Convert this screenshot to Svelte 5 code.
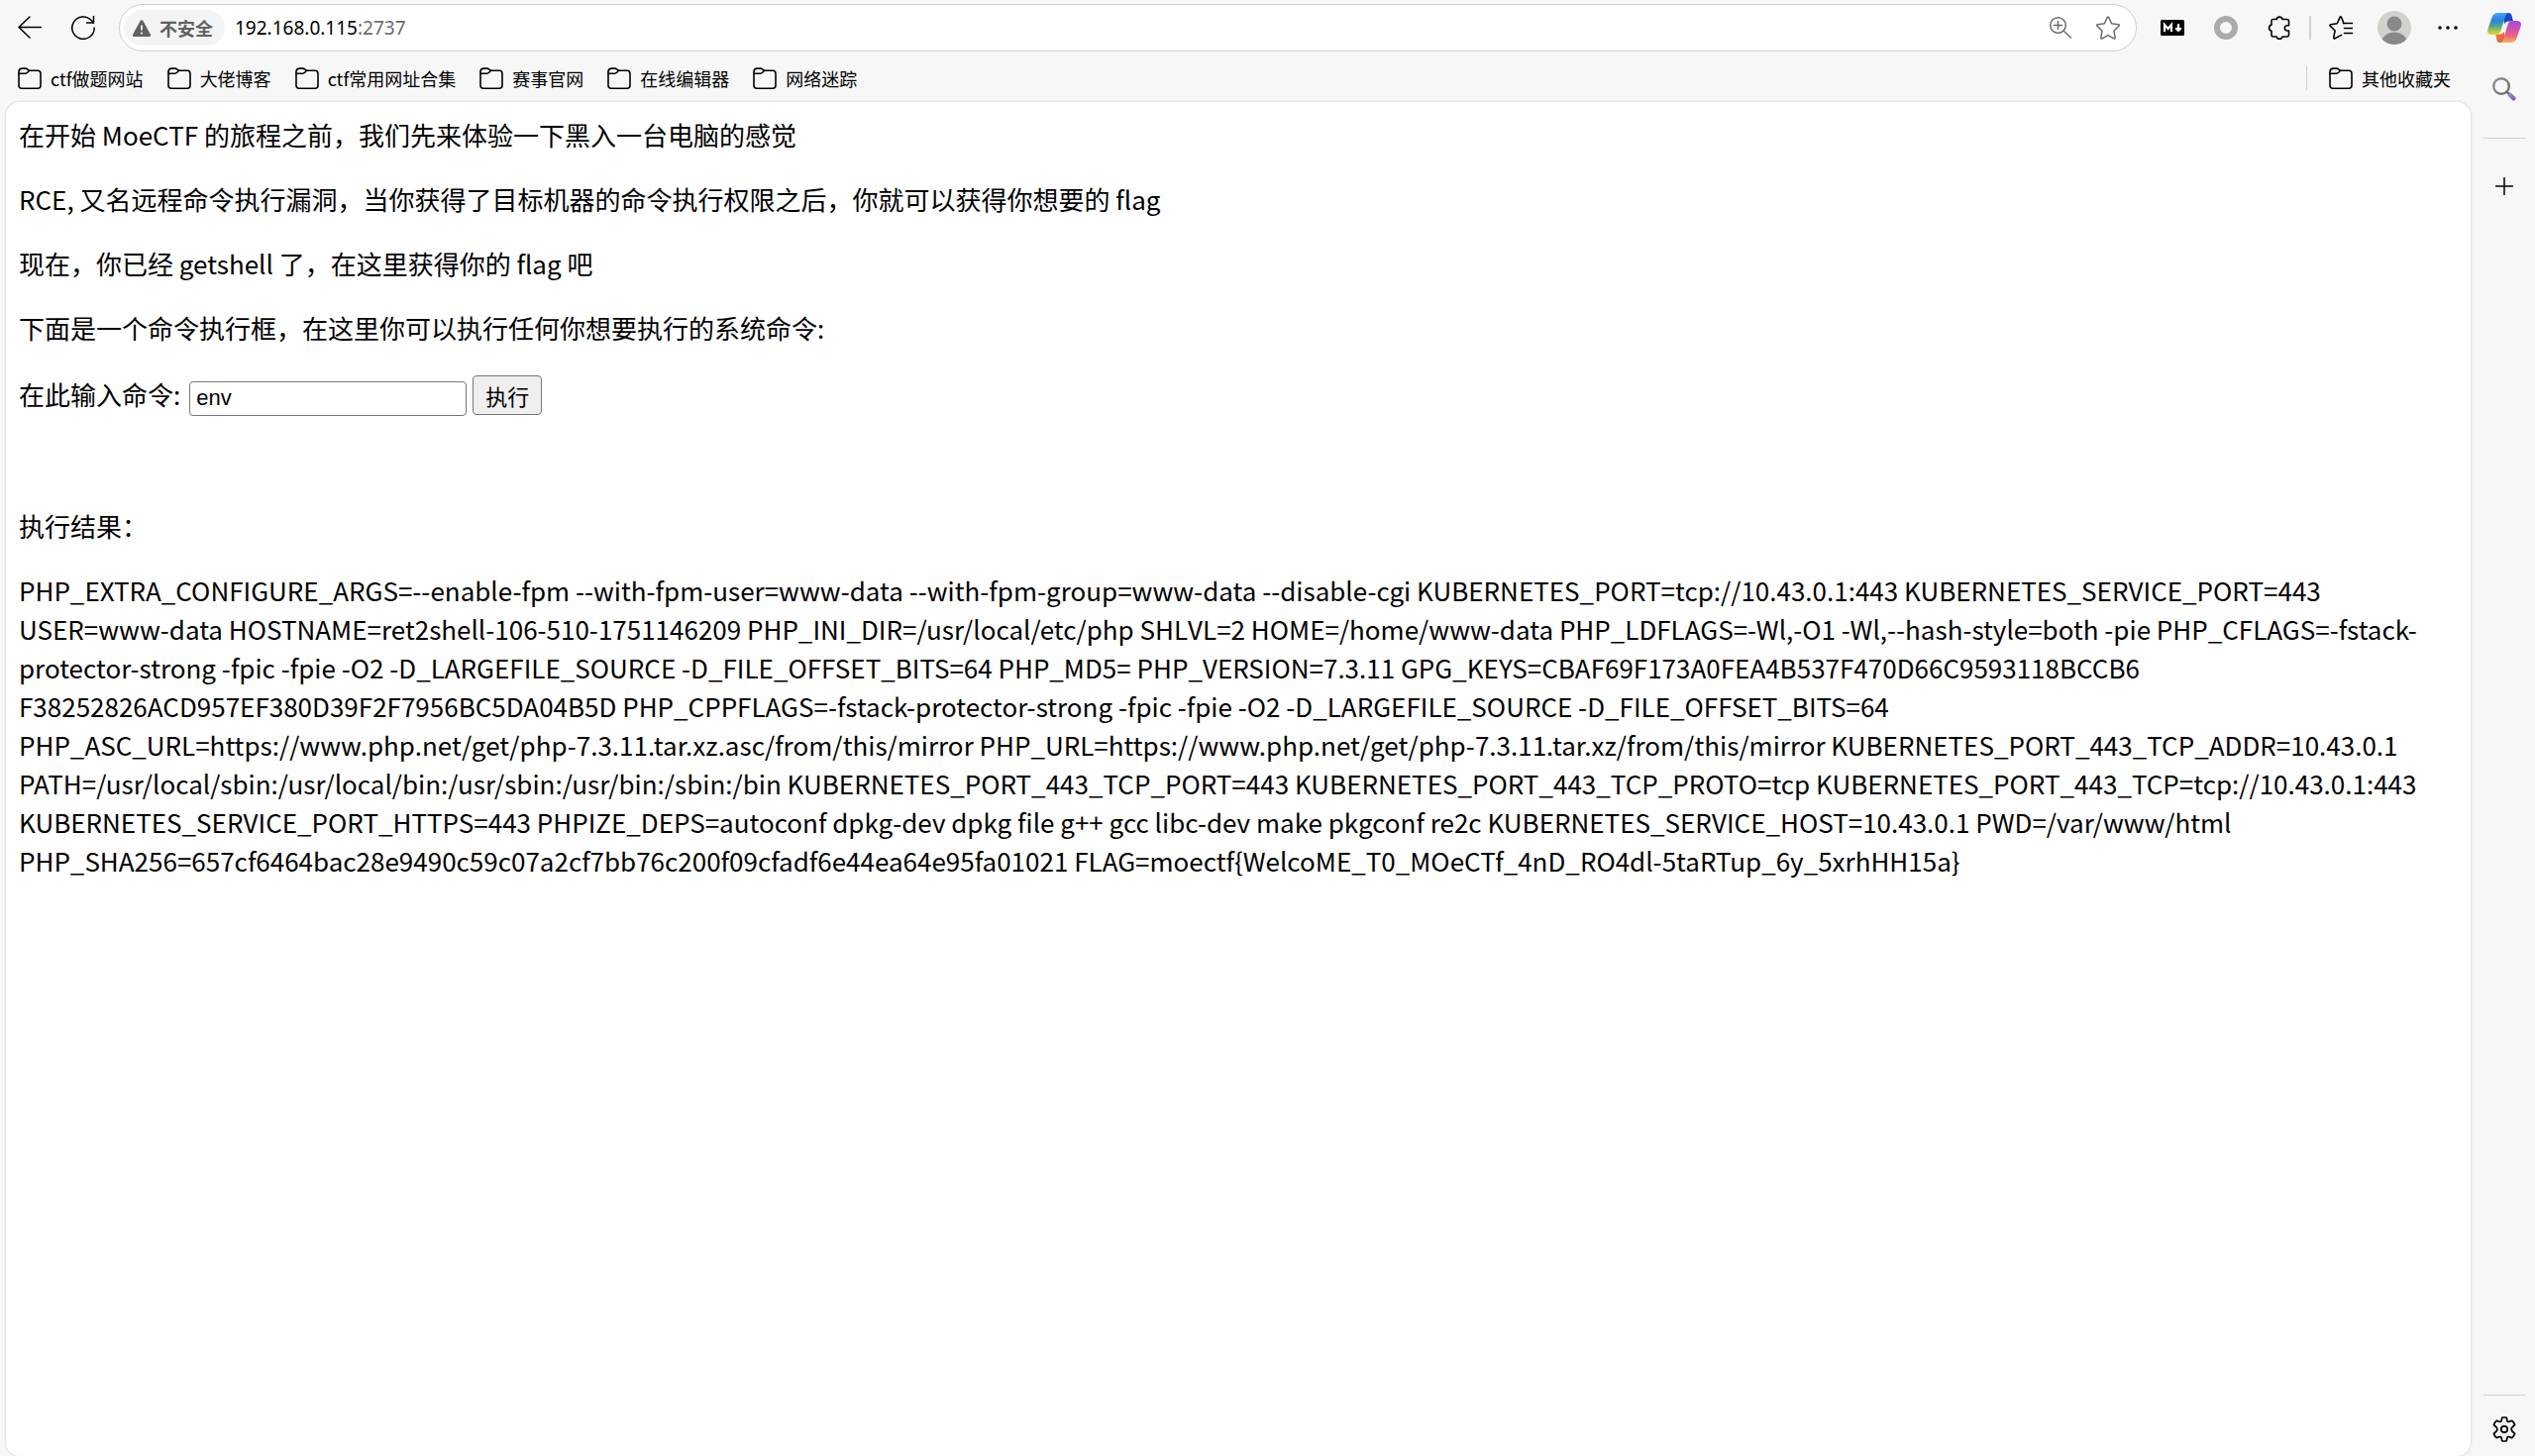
<script>
	let command = $state('env');

	const bookmarks = ['ctf做题网站', '大佬博客', 'ctf常用网址合集', '赛事官网', '在线编辑器', '网络迷踪'];

	const intro = [
		'在开始 MoeCTF 的旅程之前，我们先来体验一下黑入一台电脑的感觉',
		'RCE, 又名远程命令执行漏洞，当你获得了目标机器的命令执行权限之后，你就可以获得你想要的 flag',
		'现在，你已经 getshell 了，在这里获得你的 flag 吧',
		'下面是一个命令执行框，在这里你可以执行任何你想要执行的系统命令:'
	];

	const output = [
		'PHP_EXTRA_CONFIGURE_ARGS=--enable-fpm --with-fpm-user=www-data --with-fpm-group=www-data --disable-cgi',
		'KUBERNETES_PORT=tcp://10.43.0.1:443',
		'KUBERNETES_SERVICE_PORT=443',
		'USER=www-data',
		'HOSTNAME=ret2shell-106-510-1751146209',
		'PHP_INI_DIR=/usr/local/etc/php',
		'SHLVL=2',
		'HOME=/home/www-data',
		'PHP_LDFLAGS=-Wl,-O1 -Wl,--hash-style=both -pie',
		'PHP_CFLAGS=-fstack-protector-strong -fpic -fpie -O2 -D_LARGEFILE_SOURCE -D_FILE_OFFSET_BITS=64',
		'PHP_MD5=',
		'PHP_VERSION=7.3.11',
		'GPG_KEYS=CBAF69F173A0FEA4B537F470D66C9593118BCCB6 F38252826ACD957EF380D39F2F7956BC5DA04B5D',
		'PHP_CPPFLAGS=-fstack-protector-strong -fpic -fpie -O2 -D_LARGEFILE_SOURCE -D_FILE_OFFSET_BITS=64',
		'PHP_ASC_URL=https://www.php.net/get/php-7.3.11.tar.xz.asc/from/this/mirror',
		'PHP_URL=https://www.php.net/get/php-7.3.11.tar.xz/from/this/mirror',
		'KUBERNETES_PORT_443_TCP_ADDR=10.43.0.1',
		'PATH=/usr/local/sbin:/usr/local/bin:/usr/sbin:/usr/bin:/sbin:/bin',
		'KUBERNETES_PORT_443_TCP_PORT=443',
		'KUBERNETES_PORT_443_TCP_PROTO=tcp',
		'KUBERNETES_PORT_443_TCP=tcp://10.43.0.1:443',
		'KUBERNETES_SERVICE_PORT_HTTPS=443',
		'PHPIZE_DEPS=autoconf dpkg-dev dpkg file g++ gcc libc-dev make pkgconf re2c',
		'KUBERNETES_SERVICE_HOST=10.43.0.1',
		'PWD=/var/www/html',
		'PHP_SHA256=657cf6464bac28e9490c59c07a2cf7bb76c200f09cfadf6e44ea64e95fa01021',
		'FLAG=moectf{WelcoME_T0_MOeCTf_4nD_RO4dl-5taRTup_6y_5xrhHH15a}'
	];
</script>

{#snippet folder()}
	<svg class="icon" width="24" height="24" viewBox="0 0 24 24" stroke-width="1.6">
		<path d="M1 5.5a3.5 3.5 0 0 1 3-3.4h3.6c1 0 1.6.3 2.2.9L11 4.2h9a3 3 0 0 1 3 3v12a3 3 0 0 1-3 3H4a3 3 0 0 1-3-3z" />
		<path d="M1 7.2h6.5c1 0 1.5-.3 2.1-.9L11.6 4.2" />
	</svg>
{/snippet}

<div class="browser">
	<header class="toolbar">
		<button class="tool" aria-label="Back">
			<svg class="icon" width="24" height="24" viewBox="0 0 24 24" stroke-width="1.5">
				<path d="M24 11.5H1M12 1 1 11.5 12 22" />
			</svg>
		</button>
		<button class="tool" aria-label="Refresh">
			<svg class="icon" width="24" height="24" viewBox="0 0 24 24" stroke-width="1.5">
				<path d="M23.2 12A11.2 11.2 0 1 1 20.2 4.500L22.500 7" />
				<path d="M22.500 0v7h-7" />
			</svg>
		</button>

		<div class="address">
			<button class="site-info">
				<svg width="18" height="17" viewBox="0 0 18 17">
					<path d="M7.600 1a1.600 1.600 0 0 1 2.800 0l7.200 13.300A1.600 1.600 0 0 1 16.200 17H1.800A1.600 1.600 0 0 1 .4 14.300z" fill="#616161" />
					<path d="M9 5.500v5M9 12.500v2" stroke="#f4f4f4" stroke-width="1.8" />
				</svg>
				不安全
			</button>
			<a class="url" href="http://192.168.0.115:2737">192.168.0.115<span>:2737</span></a>
			<button class="address-btn" aria-label="Zoom">
				<svg class="icon" width="24" height="24" viewBox="0 0 24 24" stroke-width="1.5">
					<circle cx="9.5" cy="9.5" r="7.8" />
					<path d="M9.500 5.500v8M5.500 9.500h8M15.200 15.200 22.500 22" />
				</svg>
			</button>
			<button class="address-btn" aria-label="Favorite">
				<svg class="icon" width="24" height="24" viewBox="0 0 24 24" stroke-width="1.5">
					<path d="M11.200 1.600q.8-1.400 1.600 0l2.800 6.200 6.800 1q1.500.3.500 1.500l-4.900 4.800 1.200 6.800q.1 1.600-1.300.9L12 19.600l-5.900 3.200q-1.400.7-1.300-.9L6 15.100l-4.900-4.800q-1-1.200.5-1.500l6.800-1z" />
				</svg>
			</button>
		</div>

		<button class="tool" aria-label="Markdown viewer">
			<svg width="24" height="16" viewBox="0 0 24 16">
				<rect width="24" height="16" rx="1.5" />
				<path d="M4 12V5l3.500 4L11 5v7" fill="none" stroke="#fff" stroke-width="2.2" />
				<path d="M18 4v7M15.200 8.200 18 11l2.800-2.800" fill="none" stroke="#fff" stroke-width="2.2" />
			</svg>
		</button>
		<button class="tool" aria-label="Extension">
			<svg width="24" height="24" viewBox="0 0 24 24">
				<circle cx="12" cy="12" r="9" fill="none" stroke="#ababab" stroke-width="6" />
			</svg>
		</button>
		<button class="tool" aria-label="Extensions">
			<svg class="icon" width="24" height="24" viewBox="0 0 24 24" stroke-width="1.6">
				<path d="M4 5.200a1.500 1.500 0 0 1 1.500-1.700H9a3.200 3.200 0 0 1 6.200 0h4.300a2 2 0 0 1 2 2v4.200h-2a2.700 2.700 0 0 0 0 5.300h2v4a2 2 0 0 1-2 2h-4.300a3.200 3.200 0 0 1-6.200 0H5.500A1.500 1.500 0 0 1 4 19.500v-4.200a3.200 3.200 0 0 1 0-6.200z" />
			</svg>
		</button>
		<span class="divider"></span>
		<button class="tool" aria-label="Favorites">
			<svg class="icon" width="24" height="24" viewBox="0 0 24 24" stroke-width="1.6">
				<path d="M15 7.700 12.600 1.600q-.8-1.400-1.600 0L8.300 7.700l-6.500 1q-1.400.3-.5 1.500l4.800 4.800-1.300 6.700q0 1.600 1.300 1l6.500-3.300M14.500 7.500H24M15.500 12.500H24M15.500 17.500H24" />
			</svg>
		</button>
		<button class="tool" aria-label="Profile">
			<svg width="34" height="34" viewBox="0 0 34 34">
				<clipPath id="avatar"><circle cx="17" cy="17" r="17" /></clipPath>
				<g clip-path="url(#avatar)" fill="#8a8987">
					<rect width="34" height="34" fill="#d2d1ce" />
					<circle cx="17" cy="13" r="7.5" />
					<path d="M4 30c2-5 7-8.500 13-8.500S28 25 30 30c-3 3-8 4-13 4S7 33 4 30z" />
				</g>
			</svg>
		</button>
		<button class="tool" aria-label="Settings and more">
			<svg width="20" height="4" viewBox="0 0 20 4">
				<circle cx="2" cy="2" r="1.8" /><circle cx="10" cy="2" r="1.8" /><circle cx="18" cy="2" r="1.8" />
			</svg>
		</button>
		<button class="tool copilot" aria-label="Copilot">
			<svg width="34" height="30" viewBox="0 0 34 30">
				<defs>
					<linearGradient id="cool" x1="0" y1="0" x2="0" y2="1">
						<stop offset="0" stop-color="#3fa9f5" />
						<stop offset=".35" stop-color="#2b83dd" />
						<stop offset=".62" stop-color="#4fa88c" />
						<stop offset=".85" stop-color="#b4cb3d" />
						<stop offset="1" stop-color="#f6d22e" />
					</linearGradient>
					<linearGradient id="warm" x1="0" y1="0" x2="0" y2="1">
						<stop offset="0" stop-color="#9a4df0" />
						<stop offset=".45" stop-color="#d953a3" />
						<stop offset=".7" stop-color="#f0667c" />
						<stop offset="1" stop-color="#f5b25e" />
					</linearGradient>
					<linearGradient id="navy" x1="0" y1="0" x2="1" y2="1">
						<stop offset="0" stop-color="#1c50d8" />
						<stop offset="1" stop-color="#1b3cb4" />
					</linearGradient>
					<linearGradient id="ember" x1="0" y1="0" x2="1" y2="1">
						<stop offset="0" stop-color="#f0913d" />
						<stop offset="1" stop-color="#dd4a3c" />
					</linearGradient>
				</defs>
				<path d="M16 0h5.500c1.600 0 2.500 1 3 2.600L26 8.500h-4c-3 0-4 1-5 3z" fill="url(#navy)" />
				<path d="M18 30h-5.500c-1.600 0-2.500-1-3-2.600L8 21.500h4c3 0 4-1 5-3z" fill="url(#ember)" />
				<path d="M10.500 0H22c-2.500 0-3.600 2-4.400 4.600L13.500 18c-.9 2.600-2.200 4-5 4H4c-3 0-4.500-2-3.800-5L4.500 4.500C5.500 1.500 7.500 0 10.500 0z" fill="url(#cool)" />
				<path d="M23.500 30H12c2.500 0 3.600-2 4.400-4.600L20.500 12c.9-2.600 2.200-4 5-4H30c3 0 4.500 2 3.800 5l-4.300 12.500c-1 3-3 4.500-6 4.500z" fill="url(#warm)" />
			</svg>
		</button>
	</header>

	<div class="body">
		<div class="main">
			<nav class="bookmarks">
				{#each bookmarks as name (name)}
					<button class="bookmark">{@render folder()}{name}</button>
				{/each}
				<span class="divider"></span>
				<button class="bookmark">{@render folder()}其他收藏夹</button>
			</nav>

			<main class="page">
				{#each intro as line}
					<p>{line}</p>
				{/each}
				<form onsubmit={(e) => e.preventDefault()}>
					<label for="command">在此输入命令:</label>
					<input id="command" type="text" bind:value={command} />
					<button type="submit">执行</button>
				</form>
				<p>执行结果：</p>
				<p>{output.join(' ')}</p>
			</main>
		</div>

		<aside class="sidebar">
			<button class="tool" aria-label="Search">
				<svg width="24" height="24" viewBox="0 0 24 24">
					<defs>
						<linearGradient id="handle" x1="0" y1="0" x2="1" y2="1">
							<stop offset="0" stop-color="#b18be0" />
							<stop offset="1" stop-color="#7a52bd" />
						</linearGradient>
						<linearGradient id="lens" x1="0" y1="0" x2="1" y2="1">
							<stop offset="0" stop-color="#949494" />
							<stop offset="1" stop-color="#666" />
						</linearGradient>
					</defs>
					<circle cx="9" cy="9" r="7.8" fill="none" stroke="url(#lens)" stroke-width="2.4" />
					<path d="m14.500 14.500 3 3" stroke="#666" stroke-width="2.4" />
					<path d="m15.500 18.500 3-3 4.700 4.400q1 1.500-.3 3t-3 .2z" fill="url(#handle)" />
				</svg>
			</button>
			<hr />
			<button class="tool" aria-label="Customize">
				<svg class="icon" width="18" height="18" viewBox="0 0 18 18" stroke-width="1.5">
					<path d="M9 .5v17M.5 9h17" />
				</svg>
			</button>
			<hr class="bottom" />
			<button class="tool" aria-label="Settings">
				<svg class="icon" width="26" height="26" viewBox="0 0 26 26" stroke-width="1.7">
					<circle cx="13" cy="13" r="3.2" />
					<path d="M10.700 1.300q2.300-.6 4.600 0l.6 3.200q.4 1.300 1.900.9l3-1.100q2 1.600 2.800 4.200l-2.500 2.300q-1.100 1-.9 2.200t.9 2.200l2.500 2.300q-.8 2.600-2.800 4.200l-3-1.100q-1.500-.4-1.900.9l-.6 3.200q-2.300.6-4.600 0l-.6-3.200q-.4-1.300-1.900-.9l-3 1.100q-2-1.600-2.800-4.200l2.500-2.300q1-1.100 1-2.200t-1-2.200L2.400 8.500q.8-2.600 2.800-4.200l3 1.100q1.500.4 1.900-.9z" />
				</svg>
			</button>
		</aside>
	</div>
</div>

<style>
	:global(body) {
		margin: 0;
		background: #f7f7f7;
	}

	.browser {
		display: flex;
		flex-direction: column;
		min-height: 100vh;
		background: #f7f7f7;
		color: #000;
		font-family: 'Noto Sans CJK SC', sans-serif;
	}

	svg {
		flex-shrink: 0;
	}

	.icon {
		fill: none;
		stroke: currentColor;
		stroke-linecap: round;
		stroke-linejoin: round;
	}

	.toolbar {
		display: flex;
		align-items: center;
		height: 56px;
		padding: 0 1px 0 3px;
	}

	.toolbar button,
	.bookmark,
	.sidebar button {
		display: flex;
		align-items: center;
		justify-content: center;
		padding: 0;
		border: none;
		background: none;
		color: inherit;
		font-family: inherit;
		cursor: pointer;
	}

	.tool {
		width: 54px;
		height: 54px;
		flex-shrink: 0;
	}

	.toolbar .copilot {
		width: 60px;
	}

	.divider {
		width: 2px;
		height: 24px;
		margin: 0 3px;
		background: #d1d1d1;
	}

	.address {
		flex: 1;
		display: flex;
		align-items: center;
		height: 48px;
		margin: 0 9px;
		padding: 0 4px;
		box-sizing: border-box;
		border: 1px solid #cfcfcf;
		border-radius: 24px;
		background: #fff;
	}

	.address .site-info {
		gap: 9px;
		height: 36px;
		margin-right: 10px;
		padding: 0 12px 0 9px;
		border-radius: 18px;
		background: #f4f4f4;
		color: #616161;
		font-size: 18px;
		font-weight: bold;
	}

	.url {
		flex: 1;
		color: #000;
		font-family: 'Noto Sans', sans-serif;
		font-size: 19px;
		text-decoration: none;
	}

	.url span {
		color: #6b6b6b;
	}

	.address .address-btn {
		width: 48px;
		height: 36px;
		color: #6b6b6b;
	}

	.body {
		flex: 1;
		display: flex;
	}

	.main {
		flex: 1;
		min-width: 0;
		display: flex;
		flex-direction: column;
		margin: 0 3px 0 6px;
	}

	.bookmarks {
		display: flex;
		align-items: center;
		gap: 24px;
		height: 45px;
		padding: 0 20px 2px 12px;
	}

	.bookmarks .bookmark {
		gap: 9px;
		font-size: 18px;
		line-height: 24px;
		white-space: nowrap;
	}

	.bookmarks .divider {
		width: 1px;
		margin: 0 -2px 0 auto;
	}

	.page {
		flex: 1;
		padding: 13px 36px 13px 13px;
		border-radius: 14px;
		background: #fff;
		box-shadow: 0 0 3px rgba(0, 0, 0, 0.2);
		font-size: 26px;
		line-height: 39px;
	}

	.page p {
		margin: 0 0 26px;
	}

	.page form {
		display: flex;
		align-items: baseline;
		gap: 6px;
		margin: 28px 0 91px;
	}

	.page label {
		margin-right: 3px;
	}

	.page input {
		width: 280px;
		height: 35px;
		padding: 1px 6px;
		box-sizing: border-box;
		border: 1px solid #767676;
		border-radius: 4px;
		background: #fff;
		font-family: 'Liberation Sans', Arial, sans-serif;
		font-size: 22px;
	}

	.page form button {
		height: 40px;
		padding: 0 12px;
		border: 1px solid #767676;
		border-radius: 4px;
		background: #efefef;
		color: #000;
		font-family: inherit;
		font-size: 22px;
	}

	.sidebar {
		display: flex;
		flex-direction: column;
		align-items: center;
		width: 62px;
		padding-top: 7px;
	}

	.sidebar hr {
		width: 42px;
		height: 1px;
		margin: 22px 0 21px;
		border: none;
		background: #d1d1d1;
	}

	.sidebar .bottom {
		margin: auto 0 7px;
	}
</style>
